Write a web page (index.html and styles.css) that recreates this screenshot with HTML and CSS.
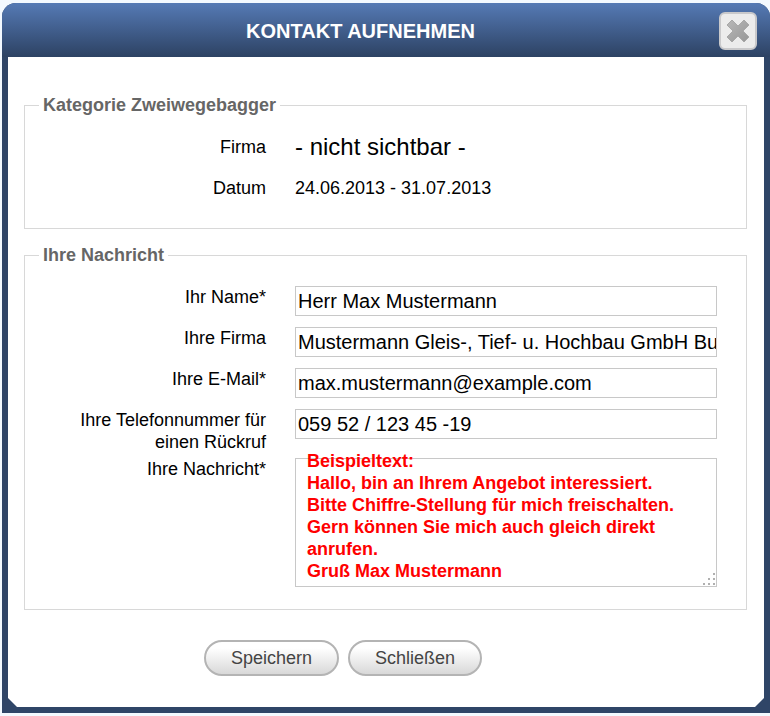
FILE: index.html
```html
<!DOCTYPE html>
<html lang="de">
<head>
    <meta charset="utf-8">
    <title>Kontakt aufnehmen</title>
    <link rel="stylesheet" href="styles.css">
</head>
<body>
    <div class="dialog">
        <div class="dialog-header">
            <h1 class="dialog-title">KONTAKT AUFNEHMEN</h1>
            <button type="button" class="close" aria-label="Schließen">
                <svg width="26" height="26" viewBox="0 0 26 26">
                    <defs>
                        <linearGradient id="cross" x1="0" y1="0" x2="1" y2="1">
                            <stop offset="0" stop-color="#b8b8b8"/>
                            <stop offset="1" stop-color="#969696"/>
                        </linearGradient>
                    </defs>
                    <path fill="url(#cross)" stroke="#a8a8a8" d="M7 2 L13 8 L19 2 L24 7 L18 13 L24 19 L19 24 L13 18 L7 24 L2 19 L8 13 L2 7 Z"/>
                </svg>
            </button>
        </div>
        <form class="dialog-body">
            <fieldset class="group">
                <legend>Kategorie Zweiwegebagger</legend>
                <dl class="rows">
                    <dt class="label">Firma</dt>
                    <dd class="value hidden-name">- nicht sichtbar -</dd>
                    <dt class="label">Datum</dt>
                    <dd class="value">24.06.2013 - 31.07.2013</dd>
                </dl>
            </fieldset>
            <fieldset class="group message-group">
                <legend>Ihre Nachricht</legend>
                <div class="rows">
                    <label class="label" for="name">Ihr Name*</label>
                    <input class="text" type="text" id="name" value="Herr Max Mustermann">
                    <label class="label" for="company">Ihre Firma</label>
                    <input class="text" type="text" id="company" value="Mustermann Gleis-, Tief- u. Hochbau GmbH Buc">
                    <label class="label" for="email">Ihre E-Mail*</label>
                    <input class="text" type="email" id="email" value="max.mustermann@example.com">
                    <label class="label" for="phone">Ihre Telefonnummer für einen Rückruf</label>
                    <input class="text" type="tel" id="phone" value="059 52 / 123 45 -19">
                    <label class="label" for="message">Ihre Nachricht*</label>
                    <div class="message">
                        <textarea id="message" aria-describedby="sample"></textarea>
                        <p class="sample" id="sample">Beispieltext:<br>
                            Hallo, bin an Ihrem Angebot interessiert.<br>
                            Bitte Chiffre-Stellung für mich freischalten.<br>
                            Gern können Sie mich auch gleich direkt<br>
                            anrufen.<br>
                            Gruß Max Mustermann</p>
                        <svg class="grip" width="13" height="13" viewBox="0 0 13 13" fill="#b0b0b0">
                            <path d="M10 0h2v2h-2z M5 5h2v2h-2z M10 5h2v2h-2z M0 10h2v2h-2z M5 10h2v2h-2z M10 10h2v2h-2z"/>
                        </svg>
                    </div>
                </div>
            </fieldset>
            <div class="actions">
                <button type="submit" class="button">Speichern</button>
                <button type="button" class="button">Schließen</button>
            </div>
        </form>
    </div>
</body>
</html>
```

FILE: styles.css
```css
* {
    box-sizing: border-box;
}
body {
    margin: 0;
    padding: 3px 0 3px 2px;
    background-color: #f3f9ff;
    font-family: "Liberation Sans", Arial, sans-serif;
    font-size: 18px;
    line-height: 22px;
    color: #000;
}
.dialog {
    padding: 0 6px 6px;
    border-radius: 14px 14px 0 0;
    background-color: #2f4567;
    overflow: hidden;
}
.dialog-header {
    display: flex;
    align-items: center;
    height: 54px;
    margin: 0 -6px;
    padding: 2px 13px 0 0;
    background: linear-gradient(#557ab5, #2d4263);
}
.dialog-title {
    flex: 1;
    margin: 0;
    color: #fff;
    font-size: 20px;
    text-align: center;
}
.close {
    display: flex;
    align-items: center;
    justify-content: center;
    width: 38px;
    height: 38px;
    padding: 0;
    border: 2px solid #c9c9cb;
    border-radius: 6px;
    background-color: #ececec;
}
.dialog-body {
    padding: 37px 17px 31px 16px;
    background-color: #fff;
    clip-path: polygon(0 0, 100% 0, 100% calc(100% - 9px), calc(100% - 9px) 100%, 9px 100%, 0 calc(100% - 9px));
}
.group {
    min-width: 0;
    margin: 0;
    padding: 20px 29px 15px 14px;
    border: 1px solid #d8d8d8;
}
.message-group {
    margin-top: 15px;
    padding-bottom: 22px;
}
.group legend {
    padding: 0 4px;
    color: #666;
    font-weight: bold;
}
.rows {
    display: grid;
    grid-template-columns: 227px 1fr;
    grid-auto-rows: minmax(36px, auto);
    column-gap: 29px;
    row-gap: 5px;
    align-items: start;
    margin: 0;
}
.label {
    padding-left: 40px;
    text-align: right;
}
.value {
    margin: 0;
}
.hidden-name {
    font-size: 24px;
}
.text {
    width: 100%;
    height: 30px;
    padding: 0 0 0 2px;
    border: 1px solid #c8c8c8;
    background-color: #fff;
    color: #000;
    font-family: inherit;
    font-size: 20px;
}
.message {
    position: relative;
}
.message textarea {
    display: block;
    width: 100%;
    height: 129px;
    padding: 4px 12px;
    border: 1px solid #c8c8c8;
    background-color: #fff;
    font: inherit;
    resize: none;
}
/* sample text lies over the top edge of the text area */
.sample {
    position: absolute;
    top: -8px;
    left: 12px;
    margin: 0;
    color: #f00;
    font-weight: bold;
    white-space: nowrap;
    pointer-events: none;
}
.grip {
    position: absolute;
    right: 1px;
    bottom: 1px;
}
.actions {
    display: flex;
    justify-content: center;
    gap: 9px;
    margin: 30px 85px 0 0;
}
.button {
    height: 36px;
    padding: 0 25px;
    border: 2px solid #b4b4b4;
    border-radius: 18px;
    background: linear-gradient(#fff 20%, #d8d8d8);
    color: #444;
    font-family: inherit;
    font-size: 18px;
}
```
